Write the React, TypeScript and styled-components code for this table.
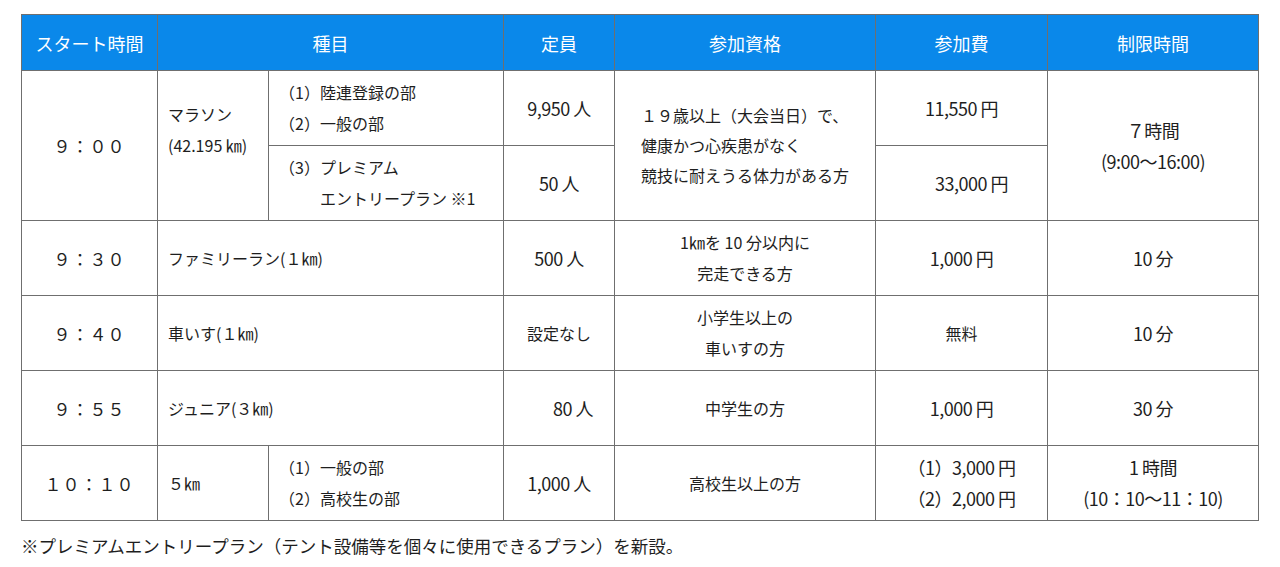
import React, { FC } from 'react';
import styled, { createGlobalStyle } from 'styled-components';

const GlobalStyle = createGlobalStyle`
  body {
    margin: 0;
    background: #ffffff;
    font-family: 'Noto Sans CJK JP', 'Noto Sans', sans-serif;
    color: #1e1e1e;
  }
`;

const Page = styled.div`
  padding: 14px 23px 0 21px;
`;

const Table = styled.table`
  width: 1237px;
  border-collapse: collapse;
  table-layout: fixed;
`;

const Col = styled.col<{ $w: number }>`
  width: ${p => p.$w}px;
`;

const HeadRow = styled.tr`
  height: 56px;
`;

const BodyRow = styled.tr`
  height: 75px;
`;

const Th = styled.th`
  background-color: #0a88ea;
  color: #ffffff;
  font-size: 18px;
  font-weight: 400;
  border: 1px solid #6f6f6f;
  padding: 0;
  text-align: center;
  vertical-align: middle;
`;

const Td = styled.td<{ $left?: boolean; $nudge?: number; $pad?: number }>`
  border: 1px solid #6f6f6f;
  font-size: 16px;
  line-height: 31px;
  text-align: ${p => (p.$left ? 'left' : 'center')};
  vertical-align: middle;
  padding: 0 0 ${p => p.$pad ?? 0}px ${p => (p.$left ? 10 : p.$nudge ?? 0)}px;
`;

const Time = styled(Td)`
  font-size: 17px;
  letter-spacing: 1px;
`;

const Qty = styled(Td)`
  font-size: 18px;
  letter-spacing: -0.5px;
`;

const Block = styled.div`
  display: inline-block;
  text-align: left;
  line-height: 30px;
`;

const ItemList = styled.div`
  display: grid;
  grid-template-columns: auto 1fr;
`;

const ItemLabel = styled.span`
  white-space: nowrap;
`;

const Note = styled.p`
  margin: 12px 0 0;
  font-size: 17.5px;
`;

type Item = { label?: string; text: string };

const Items: FC<{ items: Item[] }> = ({ items }) => (
  <ItemList>
    {items.map((it, i) => (
      <React.Fragment key={i}>
        <ItemLabel>{it.label ?? ''}</ItemLabel>
        <span>{it.text}</span>
      </React.Fragment>
    ))}
  </ItemList>
);

const widths = [136, 111, 235, 111, 261, 172, 211];

const App: FC = () => (
  <>
    <GlobalStyle />
    <Page>
      <Table>
        <colgroup>
          {widths.map((w, i) => (
            <Col key={i} $w={w} />
          ))}
        </colgroup>
        <thead>
          <HeadRow>
            <Th>スタート時間</Th>
            <Th colSpan={2}>種目</Th>
            <Th>定員</Th>
            <Th>参加資格</Th>
            <Th>参加費</Th>
            <Th>制限時間</Th>
          </HeadRow>
        </thead>
        <tbody>
          <BodyRow>
            <Time rowSpan={2}>９：００</Time>
            <Td rowSpan={2} $left $pad={31}>
              マラソン
              <br />
              (42.195 ㎞)
            </Td>
            <Td $left>
              <Items
                items={[
                  { label: '（1）', text: '陸連登録の部' },
                  { label: '（2）', text: '一般の部' },
                ]}
              />
            </Td>
            <Qty>9,950 人</Qty>
            <Td rowSpan={2}>
              <Block>
                １９歳以上（大会当日）で、
                <br />
                健康かつ心疾患がなく
                <br />
                競技に耐えうる体力がある方
              </Block>
            </Td>
            <Qty>11,550 円</Qty>
            <Qty rowSpan={2}>
              ７時間
              <br />
              (9:00～16:00)
            </Qty>
          </BodyRow>
          <BodyRow>
            <Td $left>
              <Items
                items={[
                  { label: '（3）', text: 'プレミアム' },
                  { text: 'エントリープラン ※1' },
                ]}
              />
            </Td>
            <Qty>50 人</Qty>
            <Qty $nudge={20}>33,000 円</Qty>
          </BodyRow>
          <BodyRow>
            <Time>９：３０</Time>
            <Td colSpan={2} $left>
              ファミリーラン(１㎞)
            </Td>
            <Qty>500 人</Qty>
            <Td>
              1㎞を 10 分以内に
              <br />
              完走できる方
            </Td>
            <Qty>1,000 円</Qty>
            <Qty>10 分</Qty>
          </BodyRow>
          <BodyRow>
            <Time>９：４０</Time>
            <Td colSpan={2} $left>
              車いす(１㎞)
            </Td>
            <Td>設定なし</Td>
            <Td>
              小学生以上の
              <br />
              車いすの方
            </Td>
            <Td>無料</Td>
            <Qty>10 分</Qty>
          </BodyRow>
          <BodyRow>
            <Time>９：５５</Time>
            <Td colSpan={2} $left>
              ジュニア(３㎞)
            </Td>
            <Qty $nudge={28}>80 人</Qty>
            <Td>中学生の方</Td>
            <Qty>1,000 円</Qty>
            <Qty>30 分</Qty>
          </BodyRow>
          <BodyRow>
            <Time>１０：１０</Time>
            <Td $left>５㎞</Td>
            <Td $left>
              <Items
                items={[
                  { label: '（1）', text: '一般の部' },
                  { label: '（2）', text: '高校生の部' },
                ]}
              />
            </Td>
            <Qty>1,000 人</Qty>
            <Td>高校生以上の方</Td>
            <Qty>
              （1）3,000 円
              <br />
              （2）2,000 円
            </Qty>
            <Qty>
              1 時間
              <br />
              (10：10～11：10)
            </Qty>
          </BodyRow>
        </tbody>
      </Table>
      <Note>※プレミアムエントリープラン（テント設備等を個々に使用できるプラン）を新設。</Note>
    </Page>
  </>
);

export default App;
